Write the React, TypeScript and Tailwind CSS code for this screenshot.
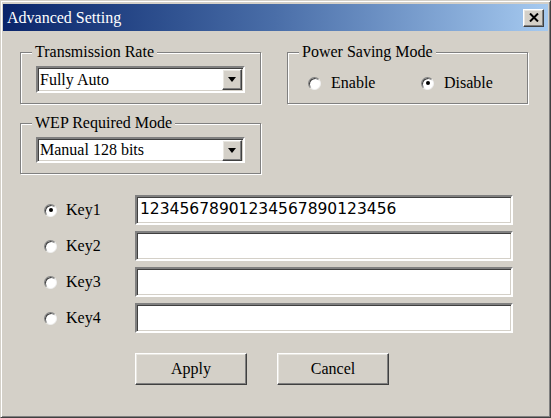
import React from "react";

// Win98-style "Advanced Setting" dialog

const sunken =
  "border-2 border-t-[#808080] border-l-[#808080] border-r-white border-b-white shadow-[inset_1px_1px_0_#404040,inset_-1px_-1px_0_#d4d0c8] bg-white";
const raised =
  "border border-t-white border-l-white border-r-[#404040] border-b-[#404040] shadow-[inset_-1px_-1px_0_#808080,inset_1px_1px_0_#e8e6e0] bg-[#d4d0c8]";

function Radio({ checked }: { checked?: boolean }) {
  return (
    <span className="relative w-[13px] h-[13px] shrink-0 rounded-full bg-white border border-t-[#808080] border-l-[#808080] border-r-[#f0f0f0] border-b-[#f0f0f0] shadow-[inset_1px_1px_0_#404040] flex items-center justify-center">
      {checked && <span className="w-[4px] h-[4px] rounded-full bg-black" />}
    </span>
  );
}

function Group({
  title,
  className,
  children,
}: {
  title: string;
  className: string;
  children: React.ReactNode;
}) {
  return (
    <fieldset
      className={`border border-[#808080] shadow-[inset_1px_1px_0_#fff,1px_1px_0_#fff] px-0 pt-0 pb-0 m-0 min-w-0 ${className}`}
    >
      <legend className="ml-[11px] px-[3px] leading-[18px] bg-[#d4d0c8] text-black">
        {title}
      </legend>
      {children}
    </fieldset>
  );
}

function Select({ value, className }: { value: string; className: string }) {
  return (
    <div className={`${sunken} flex items-center justify-between pl-[2px] pr-[1px] ${className}`}>
      <span className="leading-none">{value}</span>
      <span className={`${raised} w-[20px] h-[21px] flex items-center justify-center`}>
        <svg width="8" height="5" viewBox="0 0 8 5">
          <path d="M0 0h8L4 5z" fill="#000" />
        </svg>
      </span>
    </div>
  );
}

const KEYS = [
  { name: "Key1", value: "12345678901234567890123456", checked: true },
  { name: "Key2", value: "" },
  { name: "Key3", value: "" },
  { name: "Key4", value: "" },
];

export default function App() {
  return (
    <div className="w-[551px] h-[418px] bg-[#d4d0c8] border border-t-[#d4d0c8] border-l-[#d4d0c8] border-r-[#404040] border-b-[#404040] shadow-[inset_1px_1px_0_#fff,inset_-1px_-1px_0_#808080] p-[2px] pt-[3px] flex flex-col [font-family:'Liberation_Serif',serif] text-[16px] text-black overflow-hidden">
      {/* title bar */}
      <div className="h-[27px] shrink-0 bg-gradient-to-r from-[#0a246a] via-[#4a6ea8] to-[#a6caf0] flex items-center justify-between pl-[4px] pr-[4px]">
        <span className="text-white leading-none">Advanced Setting</span>
        <span className={`${raised} w-[21px] h-[18px] flex items-center justify-center`}>
          <svg width="10" height="9" viewBox="0 0 10 9">
            <path d="M1 0.5l8 8M9 0.5l-8 8" stroke="#000" strokeWidth="2" />
          </svg>
        </span>
      </div>

      <div className="flex flex-col pl-[17px]">
        {/* top row */}
        <div className="flex gap-[26px] mt-[12px]">
          <Group title="Transmission Rate" className="w-[241px] h-[61px]">
            <Select value="Fully Auto" className="ml-[15px] mt-[5px] w-[209px] h-[27px]" />
          </Group>
          <Group title="Power Saving Mode" className="w-[241px] h-[61px]">
            <div className="flex items-center h-[24px] mt-[10px] ml-[20px]">
              <label className="flex items-center gap-[10px] w-[113px]">
                <Radio />
                <span>Enable</span>
              </label>
              <label className="flex items-center gap-[10px]">
                <Radio checked />
                <span>Disable</span>
              </label>
            </div>
          </Group>
        </div>

        {/* WEP */}
        <div className="mt-[10px]">
          <Group title="WEP Required Mode" className="w-[241px] h-[60px]">
            <Select value="Manual 128 bits" className="ml-[15px] mt-[5px] w-[209px] h-[26px]" />
          </Group>
        </div>

        {/* keys */}
        <div className="flex flex-col gap-[6px] mt-[21px] pl-[24px]">
          {KEYS.map((k) => (
            <div key={k.name} className="flex items-center h-[30px]">
              <label className="flex items-center gap-[9px] w-[91px]">
                <Radio checked={k.checked} />
                <span>{k.name}</span>
              </label>
              <div className={`${sunken} w-[378px] h-[30px] flex items-center pl-[3px]`}>
                <span className="[font-family:'DejaVu_Sans',sans-serif] text-[15.5px] leading-none">
                  {k.value}
                </span>
              </div>
            </div>
          ))}
        </div>

        {/* buttons */}
        <div className="flex gap-[30px] mt-[20px] pl-[115px]">
          <button className={`${raised} w-[112px] h-[32px] flex items-center justify-center`}>
            Apply
          </button>
          <button className={`${raised} w-[112px] h-[32px] flex items-center justify-center`}>
            Cancel
          </button>
        </div>
      </div>
    </div>
  );
}
